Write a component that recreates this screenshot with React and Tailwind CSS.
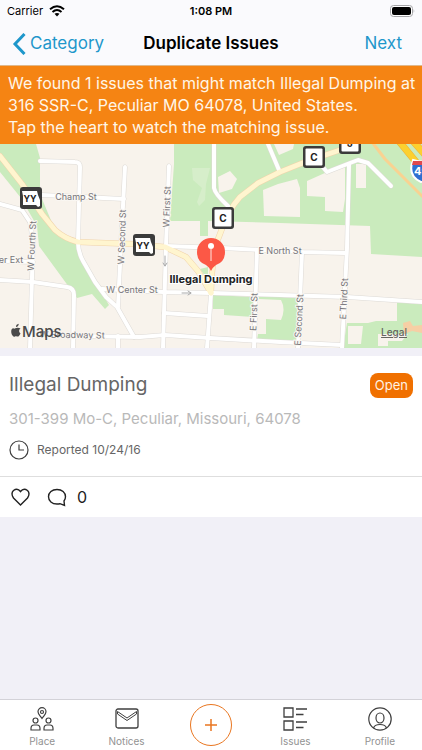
const streets = [
  'M40 17L75 18Q80 18 80 23L78 98Q78 108 83 117L95 138L106 153L117 163L134 193',
  'M42 51L124 55',
  'M125 23L121 100L118 163',
  'M169 22L166 102L163 204',
  'M0 60L22 66L30 78L33 98L30 204',
  'M0 117L33 118',
  'M0 136L33 138L67 143Q74 144 74 151L73 204',
  'M102 145L163 148L212 149L280 151L347 153L422 158',
  'M165 102L222 104L302 108L345 109',
  'M302 108L298 204',
  'M257 106L254 204',
  'M164 169L208 172',
  'M77 192L140 193L165 191L210 194L280 198L342 201',
  'M211 150L207 204',
  'M118 192L118 204',
  'M214 0L214 44Q215 50 228 62',
  'M268 0L279 26',
  'M322 22L327 28L350 19L358 16L368 19L391 42',
  'M349 20L347 104L342 204',
];

const mainRoads = [
  'M0 12L22 40L42 70L55 86Q65 95 78 98L133 100L165 103L186 113L198 127L211 149',
  'M362 -3L340 6L305 18L280 28L258 39L240 53Q228 66 220 90Q212 108 211 149',
];

const streetLabels = [
  { text: 'Champ St', x: 76, y: 56 },
  { text: 'er Ext', x: 11, y: 119 },
  { text: 'W Center St', x: 132, y: 149 },
  { text: 'W Broadway St', x: 72, y: 194, rotate: 1 },
  { text: 'E North St', x: 280, y: 110 },
  { text: 'W Fourth St', x: 35, y: 102, rotate: -87 },
  { text: 'W Second St', x: 125, y: 93, rotate: -88 },
  { text: 'W First St', x: 170, y: 63, rotate: -88 },
  { text: 'E First St', x: 257, y: 168, rotate: -88 },
  { text: 'E Second St', x: 302, y: 176, rotate: -87 },
  { text: 'E Third St', x: 347, y: 155, rotate: -87 },
];

function Shield({ x, y, label, state }) {
  return (
    <g transform={`translate(${x} ${y})`}>
      <rect x="-11" y="-11" width="22" height="22" rx="3" fill="#3b3b3b" />
      {state ? (
        <path d="M-9 -7H6L7 -3L9 2V8L7 9L5 7H-8V-2Z" fill="#fff" />
      ) : (
        <rect x="-8.500" y="-8.500" width="17" height="17" rx="1" fill="#fff" />
      )}
      <text
        x={state ? -1 : 0}
        y="4"
        textAnchor="middle"
        fontSize={state ? 9 : 10}
        fontWeight="700"
        fill="#222"
      >
        {label}
      </text>
    </g>
  );
}

function IssueMap() {
  return (
    <svg
      viewBox="0 0 422 204"
      className="block w-full font-['Inter',sans-serif]"
      role="img"
      aria-label="Map of Peculiar, Missouri"
    >
      <rect width="422" height="204" fill="#f8f3ec" />

      {/* parks */}
      <g fill="#caebbd">
        <path d="M0 0H36L40 14V50L55 86L78 98L80 112L95 138L109 161L105 165L92 150L77 154L39 102L37 82L21 54L0 28Z" />
        <path d="M174 0H422V113L371 110L370 82L280 79L208 77V92H200V77H170L174 20Z" />
        <path d="M213 151L253 153V173L224 171V165H213Z" />
        <path d="M259 152L300 154L298 199L257 196L258 190L266 190V175L281 176Q286 165 281 156L259 155Z" />
        <path d="M397 158L422 160V204H343L347 179L368 179L376 177H397Z" />
        <path d="M200 125L208 123V136Z" />
      </g>
      <path d="M192 24H210L206 40L205 56L199 62L197 58L202 44L193 36Z" fill="#d6eeca" />
      <g fill="#f8f3ec">
        <path d="M218 33L230 27L237 35L232 45L219 49Z" />
        <path d="M263 46L278 40L297 35L300 44V73L264 72Z" />
        <path d="M307 37L345 20V55L343 68L325 67V53L307 52Z" />
        <path d="M356 20H366V44H356Z" />
        <path d="M274 0H294L293 5L279 11Z" />
        <path d="M348 182H363L361 200H348Z" />
        <path d="M378 190H408L402 197H388V202H378Z" />
      </g>
      <path d="M403 179L410 177L413 182L422 181V189L412 187L404 190Z" fill="#f6cfa5" />

      {/* streets get a grey casing first, then the white fill */}
      <g fill="none" strokeLinecap="round" strokeLinejoin="round">
        {streets.map((d) => (
          <path key={d} d={d} stroke="#dddad6" strokeWidth="5" />
        ))}
        {mainRoads.map((d) => (
          <path key={d} d={d} stroke="#f1d3aa" strokeWidth="6" />
        ))}
        {streets.map((d) => (
          <path key={d} d={d} stroke="#fff" strokeWidth="4" />
        ))}
        {mainRoads.map((d) => (
          <path key={d} d={d} stroke="#fff5cf" strokeWidth="5" />
        ))}
        <path d="M372 -2L385 15L400 30L424 54" stroke="#f9d291" strokeWidth="3" />
        <path d="M398 -4L426 30" stroke="#eeb13a" strokeWidth="7" />
        <path d="M398 -4L426 30" stroke="#fcd02f" strokeWidth="6" />
        <path d="M412 -4L428 14" stroke="#eeb13a" strokeWidth="7" />
        <path d="M412 -4L428 14" stroke="#fcd02f" strokeWidth="6" />
        <path d="M165 112V122M163 119L165 122L167 119M182 149H191M188 147L191 149L188 151" stroke="#aaa" />
      </g>

      <g
        fontSize="9"
        fill="#77757a"
        stroke="#faf7f2"
        strokeWidth="2"
        paintOrder="stroke"
        textAnchor="middle"
      >
        {streetLabels.map(({ text, x, y, rotate = 0 }) => (
          <text key={text} transform={`translate(${x} ${y}) rotate(${rotate})`}>
            {text}
          </text>
        ))}
      </g>

      <Shield x={31} y={54} label="YY" state />
      <Shield x={144} y={101} label="YY" state />
      <Shield x={223} y={74} label="C" />
      <Shield x={314} y={13} label="C" />
      <Shield x={350} y={-1} label="J" />

      {/* interstate 49 */}
      <path d="M413 16Q421 19 429 16Q434 36 421 38Q407 32 413 16Z" fill="#2f6fd0" stroke="#fff" strokeWidth="2" />
      <path d="M413 17H429V21H412Z" fill="#e0484d" />
      <text x="414" y="31" fontSize="11" fontWeight="700" fill="#fff">
        49
      </text>

      <path
        d="M211 127Q209 123 206 121Q197 118 197 108A14 14 0 0 1 225 108Q225 118 216 121Q213 123 211 127Z"
        fill="#fc5846"
      />
      <circle cx="211" cy="102" r="3" fill="#fff" />
      <path d="M211 104V117" stroke="#ffe5df" strokeWidth="1" />
      <text
        x="211"
        y="139"
        textAnchor="middle"
        fontSize="11"
        fontWeight="700"
        fill="#222"
        stroke="#fff"
        strokeWidth="2"
        paintOrder="stroke"
      >
        Illegal Dumping
      </text>

      <g fill="#4a4a4a">
        <path d="M20.500 184.500c-1.400-1-3.800-1.100-5.200-.2-.8.500-1.300.5-2 0-2.300-.1-2.700 4.300-1 7 .8 1.400 1.600 1.700 2.700 1.100.6-.3 1.200-.3 1.900 0 1.400.7 2.500-.7 3.600-3-1.900-1-1.900-3.800 0-4.900zM16 183c-.1-1.800 1-3 2.700-3.300.1 1.800-1 3.200-2.700 3.300z" />
        <text x="22" y="193" fontSize="15" fontWeight="500">
          Maps
        </text>
      </g>
    </svg>
  );
}

function PlaceIcon() {
  return (
    <svg width="24" height="24" viewBox="0 0 24 24" fill="none" stroke="#3f3f3f" strokeWidth="1.200" aria-hidden="true">
      <path d="M12 11.500C10 8.500 8 7 8 4.700a4 4 0 0 1 8 0c0 2.300-2 3.800-4 6.800z" />
      <circle cx="12" cy="5" r="1.500" />
      <circle cx="5.500" cy="13.500" r="2.500" />
      <circle cx="18.500" cy="13.500" r="2.500" />
      <path d="M1 23v-1.500q0-3.500 3-3.500h3q3 0 3 3.500V23zM14 23v-1.500q0-3.500 3-3.500h3q3 0 3 3.500V23z" />
    </svg>
  );
}

function NoticesIcon() {
  return (
    <svg width="24" height="24" viewBox="0 0 24 24" fill="none" stroke="#3f3f3f" strokeWidth="1.300" aria-hidden="true">
      <rect x="1" y="2" width="22" height="19" rx="2" />
      <path d="M2.500 4.500L12 11 21.500 4.500v2.500L12 13.500 2.500 7z" strokeWidth="1" />
    </svg>
  );
}

function IssuesIcon() {
  return (
    <svg width="24" height="24" viewBox="0 0 24 24" fill="none" stroke="#3f3f3f" strokeWidth="1.300" aria-hidden="true">
      <path d="M1 1h9v9H1zM1 14h9v9H1zM13 2h11M13 7.500h7.500M13 15h11M13 20.500h7.500" />
    </svg>
  );
}

function ProfileIcon() {
  return (
    <svg width="24" height="24" viewBox="0 0 24 24" fill="none" stroke="#3f3f3f" strokeWidth="1.200" aria-hidden="true">
      <circle cx="12" cy="12" r="11.200" />
      <ellipse cx="12" cy="11" rx="4" ry="5" />
      <path d="M5.500 21q1-3.500 6.500-3.500t6.500 3.500" />
    </svg>
  );
}

function Tab({ label, icon }) {
  return (
    <button type="button" className="flex flex-1 flex-col items-center gap-1 pt-[7px] text-[10px] leading-3 text-[#929292]">
      {icon}
      {label}
    </button>
  );
}

export default function App() {
  return (
    <div className="flex min-h-screen flex-col bg-[#f1f0f7] font-['Inter',sans-serif]">
      <header className="border-b border-[#dfb88c] bg-[#fafafd]">
        <div className="grid h-[22px] grid-cols-3 items-center px-[7px] text-[11px] text-black">
          <div className="flex items-center gap-1.5">
            <span>Carrier</span>
            <svg width="16" height="12" viewBox="0 0 16 12" fill="none" stroke="#000" strokeWidth="2" aria-hidden="true">
              <path d="M1 4.300Q8-1.700 15 4.300M3.500 7Q8 3 12.500 7" />
              <path d="M5.500 8.800Q8 7 10.500 8.800L8 11.500z" fill="#000" stroke="none" />
            </svg>
          </div>
          <span className="text-center font-semibold">1:08 PM</span>
          <svg className="justify-self-end" width="25" height="12" viewBox="0 0 25 12" aria-hidden="true">
            <rect x="0.500" y="0.500" width="22" height="11" rx="3" fill="#fff" stroke="#a5a5a8" />
            <rect x="2" y="2" width="19" height="8" rx="2" fill="#000" />
            <path d="M23.700 4Q25 6 23.700 8z" fill="#a5a5a8" />
          </svg>
        </div>
        <nav className="grid h-[43px] grid-cols-[1fr_auto_1fr] items-center px-3 text-[17px] text-[#1e97cb]">
          <button type="button" className="flex items-center gap-1 justify-self-start">
            <svg width="14" height="22" viewBox="0 0 14 22" fill="none" stroke="currentColor" strokeWidth="3" aria-hidden="true">
              <path d="M12.500 1L3 11l9.500 10" />
            </svg>
            Category
          </button>
          <h1 className="font-semibold text-black">Duplicate Issues</h1>
          <button type="button" className="justify-self-end pr-2">Next</button>
        </nav>
      </header>

      <p className="bg-[#f58413] py-1.5 pr-1 pl-2 text-base leading-[22px] text-[#fff6e8]">
        We found 1 issues that might match Illegal Dumping at
        <br />
        316 SSR-C, Peculiar MO 64078, United States.
        <br />
        Tap the heart to watch the matching issue.
      </p>

      <div className="relative">
        <IssueMap />
        <a href="#legal" className="absolute right-[15px] bottom-2 text-[10px] font-medium text-[#66655f] underline">
          Legal
        </a>
      </div>

      <article className="mt-2 bg-white">
        <div className="px-[9px] pt-4 pb-4">
          <div className="flex items-center justify-between">
            <h2 className="text-[19px] leading-[26px] text-[#666]">Illegal Dumping</h2>
            <span className="rounded-lg bg-[#f07000] px-[5px] py-0.5 text-[13px] leading-[21px] text-[#fff2e2]">
              Open
            </span>
          </div>
          <p className="mt-2 text-[15px] leading-[26px] text-[#b9b9b9]">301-399 Mo-C, Peculiar, Missouri, 64078</p>
          <div className="mt-2 flex items-center gap-2 text-xs leading-5 text-[#666]">
            <svg width="20" height="20" viewBox="0 0 20 20" fill="none" stroke="#3f3f3f" strokeWidth="1.200" aria-hidden="true">
              <circle cx="10" cy="10" r="9" />
              <path d="M10 4.500V10h5" />
            </svg>
            Reported 10/24/16
          </div>
        </div>
        <div className="flex h-[41px] items-center border-t border-[#dedede] px-[11px] text-[#222]">
          <button type="button" aria-label="Watch issue">
            <svg width="20" height="20" viewBox="0 0 20 20" fill="none" stroke="currentColor" strokeWidth="1.400" aria-hidden="true">
              <path d="M9.500 18L2.500 11Q-.5 6.500 2.500 3.500Q6.500.5 9.500 4.500Q12.500.5 16.500 3.500Q19.500 6.500 16.500 11Z" />
            </svg>
          </button>
          <button type="button" aria-label="Comments" className="ml-4 flex items-center gap-2.5 text-base">
            <svg width="20" height="20" viewBox="0 0 20 20" fill="none" stroke="currentColor" strokeWidth="1.400" aria-hidden="true">
              <path d="M13 16.700Q11.500 17 10 17C5 17 1.500 14 1.500 9.800S5 2.500 10 2.500S18.500 5.500 18.500 9.800Q18.500 12 17 14L17.500 18.500Z" />
            </svg>
            0
          </button>
        </div>
      </article>

      <footer className="mt-auto flex h-[51px] border-t border-[#d3d2d8] bg-white">
        <Tab label="Place" icon={<PlaceIcon />} />
        <Tab label="Notices" icon={<NoticesIcon />} />
        <div className="flex flex-1 items-center justify-center">
          <button
            type="button"
            aria-label="Report an issue"
            className="flex size-[42px] items-center justify-center rounded-full border border-[#e97620] text-[#e97620]"
          >
            <svg width="14" height="14" viewBox="0 0 14 14" fill="none" stroke="currentColor" strokeWidth="1.500" aria-hidden="true">
              <path d="M7 1v12M1 7h12" />
            </svg>
          </button>
        </div>
        <Tab label="Issues" icon={<IssuesIcon />} />
        <Tab label="Profile" icon={<ProfileIcon />} />
      </footer>
    </div>
  );
}
